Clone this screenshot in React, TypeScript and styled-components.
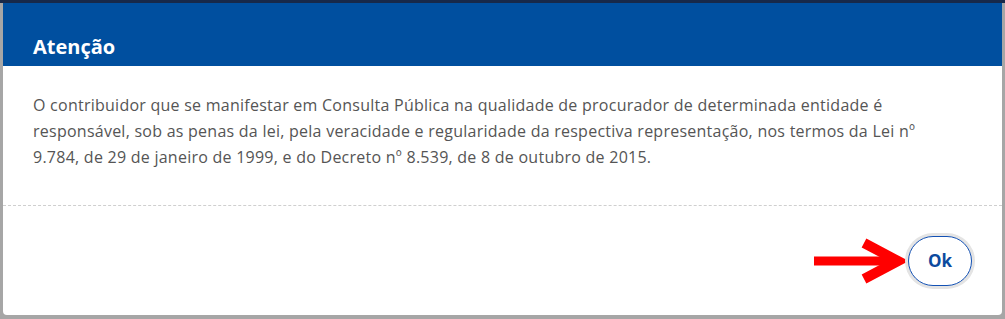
import React from "react";
import styled, { createGlobalStyle } from "styled-components";

const GlobalStyle = createGlobalStyle`
  html, body { margin: 0; padding: 0; }
  body {
    width: 1005px;
    height: 319px;
    overflow: hidden;
    background: #a6a6a6;
    font-family: "Open Sans", "Noto Sans", sans-serif;
  }
`;

const Page = styled.div`
  width: 1005px;
  height: 319px;
  display: flex;
  flex-direction: column;
  background: #a6a6a6;
`;

const TopStrip = styled.div`
  height: 3px;
  background: #17294a;
  flex-shrink: 0;
`;

const Stage = styled.div`
  flex: 1;
  display: flex;
  padding: 0 3px 4px 3px;
`;

const Modal = styled.div`
  width: 999px;
  height: 312px;
  background: #ffffff;
  border-radius: 0 0 4px 4px;
  display: flex;
  flex-direction: column;
  overflow: hidden;
`;

const Header = styled.div`
  height: 63px;
  background: #004f9f;
  display: flex;
  align-items: flex-end;
  padding: 0 30px 6px 30px;
  box-sizing: border-box;
`;

const Title = styled.h2`
  margin: 0;
  color: #ffffff;
  font-size: 20px;
  font-weight: 700;
  line-height: 26px;
`;

const Body = styled.div`
  padding: 26px 30px 0 30px;
  height: 140px;
  box-sizing: border-box;
  border-bottom: 1px dashed #cfcfcf;
`;

const Text = styled.p`
  margin: 0;
  max-width: 905px;
  color: #555555;
  font-size: 16px;
  letter-spacing: 0.25px;
  line-height: 26px;
`;

const Footer = styled.div`
  flex: 1;
  display: flex;
  align-items: center;
  justify-content: flex-end;
  padding: 0 30px 0 0;
  gap: 2px;
`;

const Arrow = styled.svg`
  width: 92px;
  height: 50px;
  display: block;
`;

const OkButton = styled.button`
  width: 64px;
  height: 50px;
  border-radius: 25px;
  border: 1.5px solid #1351b4;
  background: #ffffff;
  color: #0c4a9e;
  font-family: "Open Sans", "Noto Sans", sans-serif;
  font-size: 17px;
  font-weight: 700;
  box-shadow: 0 0 0 3px #e4e4e4;
  cursor: pointer;
`;

export default function App() {
  return (
    <>
      <GlobalStyle />
      <Page>
        <TopStrip />
        <Stage>
          <Modal>
            <Header>
              <Title>Atenção</Title>
            </Header>
            <Body>
              <Text>
                O contribuidor que se manifestar em Consulta Pública na qualidade de procurador de
                determinada entidade é responsável, sob as penas da lei, pela veracidade e
                regularidade da respectiva representação, nos termos da Lei nº 9.784, de 29 de
                janeiro de 1999, e do Decreto nº 8.539, de 8 de outubro de 2015.
              </Text>
            </Body>
            <Footer>
              <Arrow viewBox="0 0 92 50">
                <line x1="0" y1="25" x2="80" y2="25" stroke="#ff0000" strokeWidth="9" />
                <polyline
                  points="50,7 84,25 50,43"
                  fill="none"
                  stroke="#ff0000"
                  strokeWidth="10"
                  strokeLinejoin="miter"
                />
              </Arrow>
              <OkButton>Ok</OkButton>
            </Footer>
          </Modal>
        </Stage>
      </Page>
    </>
  );
}
